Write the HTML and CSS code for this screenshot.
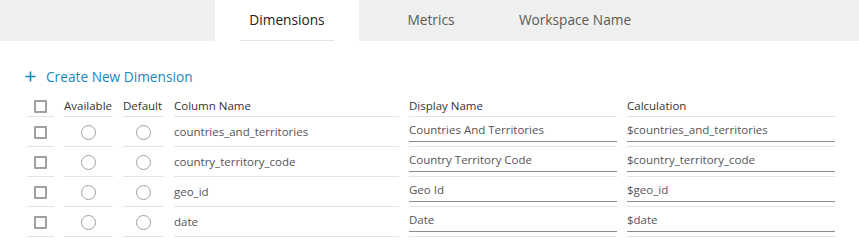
FILE: index.html
```html
<!DOCTYPE html>
<html lang="en">
<head>
<meta charset="utf-8">
<title>Dimensions</title>
<link rel="stylesheet" href="styles.css">
</head>
<body>
<nav class="tabs">
  <div class="tab tab-active"><span class="tab-label">Dimensions</span></div>
  <div class="tab"><span class="tab-label">Metrics</span></div>
  <div class="tab"><span class="tab-label">Workspace Name</span></div>
</nav>
<main class="content">
  <a class="create-link" href="#">
    <svg class="plus-icon" width="11" height="11" viewBox="0 0 11 11" aria-hidden="true">
      <path d="M5.5 0.5v10M0.5 5.5h10" stroke="currentColor" stroke-width="1.6" fill="none"/>
    </svg>
    <span>Create New Dimension</span>
  </a>
  <table class="grid">
    <colgroup>
      <col class="c-check"><col class="c-avail"><col class="c-default"><col class="c-column"><col class="c-display"><col class="c-calc">
    </colgroup>
    <thead>
      <tr>
        <th class="center"><span class="checkbox"></span></th>
        <th>Available</th>
        <th>Default</th>
        <th>Column Name</th>
        <th>Display Name</th>
        <th>Calculation</th>
      </tr>
    </thead>
    <tbody>
      <tr>
        <td class="center"><span class="checkbox"></span></td>
        <td class="center"><span class="radio"></span></td>
        <td class="center"><span class="radio"></span></td>
        <td>countries_and_territories</td>
        <td><div class="field">Countries And Territories</div></td>
        <td><div class="field">$countries_and_territories</div></td>
      </tr>
      <tr>
        <td class="center"><span class="checkbox"></span></td>
        <td class="center"><span class="radio"></span></td>
        <td class="center"><span class="radio"></span></td>
        <td>country_territory_code</td>
        <td><div class="field">Country Territory Code</div></td>
        <td><div class="field">$country_territory_code</div></td>
      </tr>
      <tr>
        <td class="center"><span class="checkbox"></span></td>
        <td class="center"><span class="radio"></span></td>
        <td class="center"><span class="radio"></span></td>
        <td>geo_id</td>
        <td><div class="field">Geo Id</div></td>
        <td><div class="field">$geo_id</div></td>
      </tr>
      <tr>
        <td class="center"><span class="checkbox"></span></td>
        <td class="center"><span class="radio"></span></td>
        <td class="center"><span class="radio"></span></td>
        <td>date</td>
        <td><div class="field">Date</div></td>
        <td><div class="field">$date</div></td>
      </tr>
    </tbody>
  </table>
</main>
</body>
</html>
```

FILE: styles.css
```css
* { box-sizing: border-box; }

body {
  margin: 0;
  background: #ffffff;
  font-family: "Open Sans", "DejaVu Sans", sans-serif;
  font-size: 13.7px;
  color: #555555;
}

.tabs {
  display: flex;
  height: 41px;
  padding-left: 215px;
  background: #eeefef;
}

.tab {
  width: 144px;
  display: flex;
  justify-content: center;
  align-items: stretch;
  color: #5a5a5a;
}

.tab-active {
  background: #ffffff;
  color: #222222;
}

.tab-label {
  display: flex;
  align-items: center;
  padding: 0 9px 2px;
}

.tab-active .tab-label {
  border-bottom: 1px solid #e3e3e3;
}

.content {
  padding: 25px 0 0 17px;
}

.create-link {
  display: flex;
  align-items: center;
  gap: 10px;
  height: 20px;
  margin-left: 8px;
  color: #1a87c2;
  text-decoration: none;
}

.plus-icon { display: block; }

.grid {
  table-layout: fixed;
  width: 828px;
  border-collapse: separate;
  border-spacing: 10px 0;
  font-size: 11.5px;
}

.c-check { width: 27px; }
.c-avail { width: 49px; }
.c-default { width: 41px; }
.c-column { width: 225px; }
.c-display { width: 208px; }
.c-calc { width: 208px; }

th, td {
  padding: 0;
  border-bottom: 1px solid #e3e3e3;
  text-align: left;
  white-space: nowrap;
}

th {
  height: 31px;
  vertical-align: bottom;
  padding-bottom: 1px;
  font-weight: 400;
  color: #333333;
  line-height: 18px;
}

td {
  height: 30px;
  vertical-align: middle;
  color: #555555;
}

.center { text-align: center; }

.checkbox {
  display: inline-block;
  width: 13px;
  height: 13px;
  border: 2px solid #a0a0a0;
  border-radius: 1px;
  vertical-align: middle;
}

.radio {
  display: inline-block;
  width: 15px;
  height: 15px;
  border: 1.5px solid #a0a0a0;
  border-radius: 50%;
  vertical-align: middle;
}

.field {
  height: 25px;
  margin-bottom: 4px;
  line-height: 26px;
  border-bottom: 1px solid #8c8c8c;
}
```
